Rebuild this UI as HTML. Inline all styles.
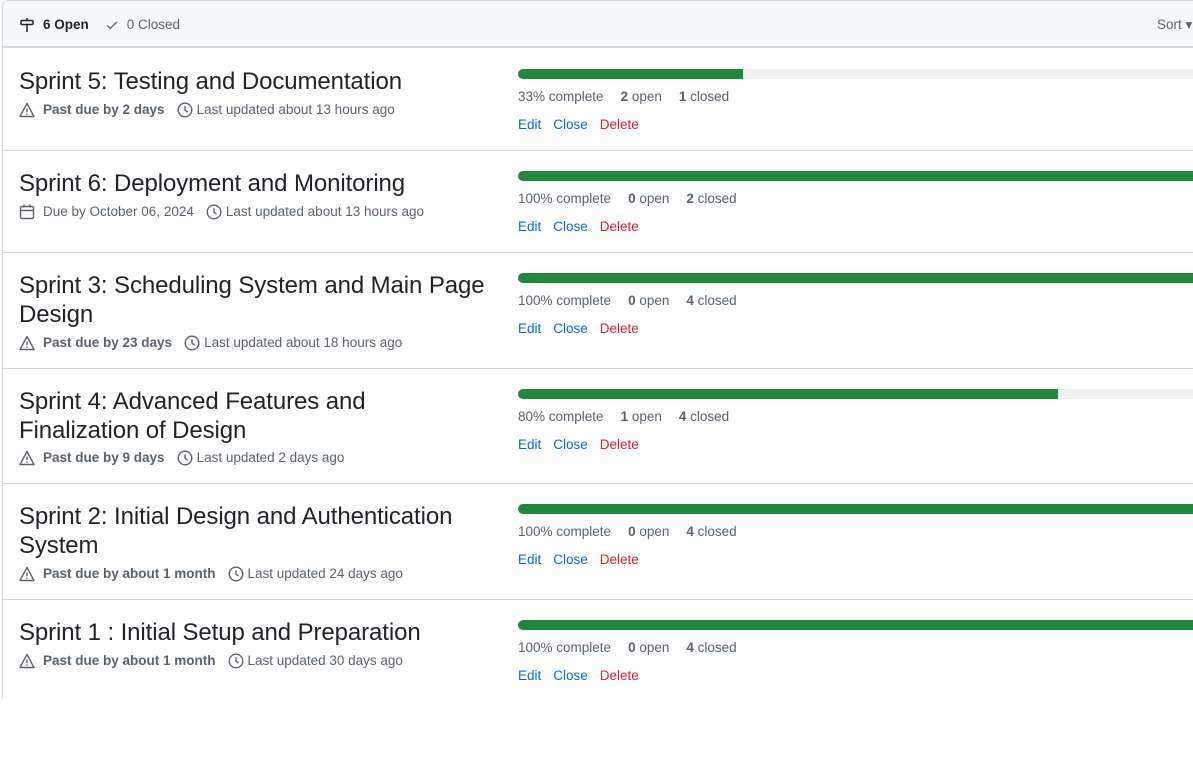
<!DOCTYPE html>
<html><head><meta charset="utf-8"><style>
*{margin:0;padding:0;box-sizing:border-box}
body{width:1193px;height:782px;background:#fff;font-family:"Liberation Sans",sans-serif;color:#1f2328;position:relative;overflow:hidden}
.hdr{position:absolute;left:2px;top:0;width:1200px;height:48px;background:#f6f8fa;border:1px solid #d0d7de;border-bottom:2px solid #d0d7de;border-radius:6px 0 0 0}
.lb{position:absolute;left:2px;top:48px;width:1px;height:651px;background:#d0d7de}
.sep{position:absolute;left:2px;width:1200px;height:1px;background:#d0d7de}
.t{position:absolute;left:19px;font-size:24px;line-height:29px;color:#1f2328;white-space:nowrap;letter-spacing:-0.1px}
.m{position:absolute;left:19px;font-size:13.5px;line-height:18px;color:#59636e;white-space:nowrap;display:flex;align-items:center}
.m b{color:#59636e;font-weight:bold}
.m svg{margin-right:8px}
.bar{position:absolute;left:518px;width:675px;height:10px;background:#eff1f3;border-radius:6px 0 0 6px;overflow:hidden}
.bar i{display:block;height:10px;background:#1f883d}
.s{position:absolute;left:518px;font-size:13.5px;line-height:18px;color:#59636e;white-space:nowrap}
.s b{color:#59636e}
.s span{margin-right:17px}
.l{position:absolute;left:518px;font-size:13.5px;line-height:18px;white-space:nowrap}
.l a{color:#0969da;text-decoration:none;margin-right:12px}
.l a.d{color:#d1242f}
</style></head><body>
<div class="hdr"></div>
<div style="position:absolute;left:19px;top:16px;font-size:13.5px;line-height:18px;display:flex;align-items:center;white-space:nowrap">
<svg width="16" height="16" viewBox="0 0 16 16" fill="none" stroke="#1f2328" stroke-width="1.5"><rect x="2" y="3.5" width="12" height="4" rx="1"/><path d="M8 1v2.5M8 7.5V15"/></svg>
<b style="margin-left:8px;color:#1f2328">6 Open</b>
<svg style="margin-left:16px" width="14" height="14" viewBox="0 0 16 16" fill="none" stroke="#59636e" stroke-width="1.5"><path d="M2.5 8.5l3.5 3.5 7.5-7.5"/></svg>
<span style="margin-left:8px;color:#59636e">0 Closed</span></div>
<div style="position:absolute;left:1157px;top:16px;font-size:13.5px;line-height:18px;color:#59636e">Sort ▾</div>
<div class="lb"></div>

<div class="sep" style="top:150px"></div>
<div class="sep" style="top:252px"></div>
<div class="sep" style="top:368px"></div>
<div class="sep" style="top:483px"></div>
<div class="sep" style="top:599px"></div>

<svg width="0" height="0" style="position:absolute"><defs>
<g id="w"><path d="M8 1.5L1 14.5h14z" fill="none" stroke="#59636e" stroke-width="1.4" stroke-linejoin="round"/><path d="M8 6.5v3.5" stroke="#59636e" stroke-width="1.4"/><circle cx="8" cy="12" r=".8" fill="#59636e"/></g>
<g id="c"><circle cx="8" cy="8" r="6.8" fill="none" stroke="#59636e" stroke-width="1.4"/><path d="M8 4.3V8.3l2.6 1.7" fill="none" stroke="#59636e" stroke-width="1.4"/></g>
<g id="k"><rect x="1.5" y="2.5" width="13" height="12" rx="1.5" fill="none" stroke="#59636e" stroke-width="1.4"/><path d="M1.5 6.5h13M5 0.5v3M11 0.5v3" stroke="#59636e" stroke-width="1.4"/></g>
</defs></svg>

<div class="t" style="top:67px">Sprint 5: Testing and Documentation</div>
<div class="m" style="top:101px"><svg width="16" height="16"><use href="#w"/></svg><b>Past due by 2 days</b><svg style="margin-left:12px;margin-right:4px" width="16" height="16"><use href="#c"/></svg>Last updated about 13 hours ago</div>
<div class="bar" style="top:69px"><i style="width:225px"></i></div>
<div class="s" style="top:88px"><span>33% complete</span><span><b>2</b> open</span><span><b>1</b> closed</span></div>
<div class="l" style="top:116px"><a>Edit</a><a>Close</a><a class="d">Delete</a></div>

<div class="t" style="top:169px">Sprint 6: Deployment and Monitoring</div>
<div class="m" style="top:203px"><svg width="16" height="16"><use href="#k"/></svg>Due by October 06, 2024<svg style="margin-left:12px;margin-right:4px" width="16" height="16"><use href="#c"/></svg>Last updated about 13 hours ago</div>
<div class="bar" style="top:171px"><i style="width:675px"></i></div>
<div class="s" style="top:190px"><span>100% complete</span><span><b>0</b> open</span><span><b>2</b> closed</span></div>
<div class="l" style="top:218px"><a>Edit</a><a>Close</a><a class="d">Delete</a></div>

<div class="t" style="top:271px">Sprint 3: Scheduling System and Main Page<br>Design</div>
<div class="m" style="top:334px"><svg width="16" height="16"><use href="#w"/></svg><b>Past due by 23 days</b><svg style="margin-left:12px;margin-right:4px" width="16" height="16"><use href="#c"/></svg>Last updated about 18 hours ago</div>
<div class="bar" style="top:273px"><i style="width:675px"></i></div>
<div class="s" style="top:292px"><span>100% complete</span><span><b>0</b> open</span><span><b>4</b> closed</span></div>
<div class="l" style="top:320px"><a>Edit</a><a>Close</a><a class="d">Delete</a></div>

<div class="t" style="top:387px">Sprint 4: Advanced Features and<br>Finalization of Design</div>
<div class="m" style="top:449px"><svg width="16" height="16"><use href="#w"/></svg><b>Past due by 9 days</b><svg style="margin-left:12px;margin-right:4px" width="16" height="16"><use href="#c"/></svg>Last updated 2 days ago</div>
<div class="bar" style="top:389px"><i style="width:540px"></i></div>
<div class="s" style="top:408px"><span>80% complete</span><span><b>1</b> open</span><span><b>4</b> closed</span></div>
<div class="l" style="top:436px"><a>Edit</a><a>Close</a><a class="d">Delete</a></div>

<div class="t" style="top:502px">Sprint 2: Initial Design and Authentication<br>System</div>
<div class="m" style="top:565px"><svg width="16" height="16"><use href="#w"/></svg><b>Past due by about 1 month</b><svg style="margin-left:12px;margin-right:4px" width="16" height="16"><use href="#c"/></svg>Last updated 24 days ago</div>
<div class="bar" style="top:504px"><i style="width:675px"></i></div>
<div class="s" style="top:523px"><span>100% complete</span><span><b>0</b> open</span><span><b>4</b> closed</span></div>
<div class="l" style="top:551px"><a>Edit</a><a>Close</a><a class="d">Delete</a></div>

<div class="t" style="top:618px">Sprint 1 : Initial Setup and Preparation</div>
<div class="m" style="top:652px"><svg width="16" height="16"><use href="#w"/></svg><b>Past due by about 1 month</b><svg style="margin-left:12px;margin-right:4px" width="16" height="16"><use href="#c"/></svg>Last updated 30 days ago</div>
<div class="bar" style="top:620px"><i style="width:675px"></i></div>
<div class="s" style="top:639px"><span>100% complete</span><span><b>0</b> open</span><span><b>4</b> closed</span></div>
<div class="l" style="top:667px"><a>Edit</a><a>Close</a><a class="d">Delete</a></div>
</body></html>
